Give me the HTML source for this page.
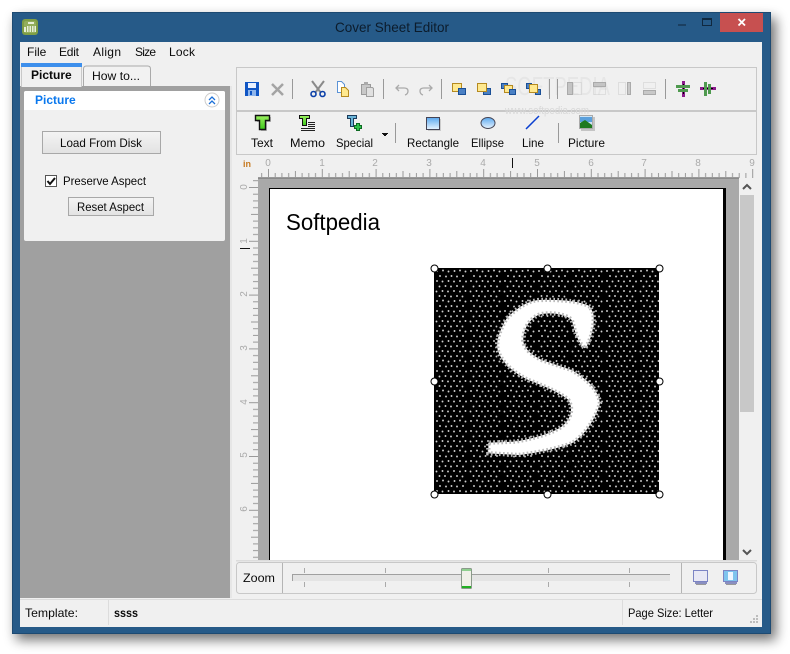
<!DOCTYPE html>
<html><head><meta charset="utf-8"><title>Cover Sheet Editor</title>
<style>
html,body{margin:0;padding:0;background:#fff;width:790px;height:654px;overflow:hidden}
svg{display:block;position:absolute;left:0;top:0}
text{font-family:"Liberation Sans",sans-serif;font-size:12px;fill:#0a0a0a}
.b{font-weight:bold}
.r{fill:#aaa;font-size:10px;text-anchor:middle}
</style></head><body>
<svg width="790" height="654" viewBox="0 0 790 654" xmlns="http://www.w3.org/2000/svg">
<defs>
<filter id="sh" x="-10%" y="-10%" width="120%" height="120%"><feGaussianBlur stdDeviation="6"/></filter>
<linearGradient id="btn" x1="0" y1="0" x2="0" y2="1"><stop offset="0" stop-color="#f4f4f4"/><stop offset="1" stop-color="#e2e2e2"/></linearGradient>
<linearGradient id="sky" x1="0" y1="0" x2="0" y2="1"><stop offset="0" stop-color="#5aa8ee"/><stop offset="1" stop-color="#e8f4ff"/></linearGradient>
<linearGradient id="grn" x1="0" y1="0" x2="0" y2="1"><stop offset="0" stop-color="#9cf060"/><stop offset="1" stop-color="#3cc81a"/></linearGradient>
<pattern id="hr" x="268" y="168" width="53.8" height="10" patternUnits="userSpaceOnUse">
<rect x="0" y="1" width="1" height="9" fill="#999"/><rect x="6.7" y="5" width="1" height="5" fill="#999"/><rect x="13.4" y="5" width="1" height="5" fill="#999"/><rect x="20.2" y="5" width="1" height="5" fill="#999"/><rect x="26.9" y="3" width="1" height="7" fill="#999"/><rect x="33.6" y="5" width="1" height="5" fill="#999"/><rect x="40.3" y="5" width="1" height="5" fill="#999"/><rect x="47" y="5" width="1" height="5" fill="#999"/>
</pattern>
<pattern id="vr" x="248" y="187" width="10" height="53.8" patternUnits="userSpaceOnUse">
<rect y="0" x="1" height="1" width="9" fill="#999"/><rect y="6.7" x="5" height="1" width="5" fill="#999"/><rect y="13.4" x="5" height="1" width="5" fill="#999"/><rect y="20.2" x="5" height="1" width="5" fill="#999"/><rect y="26.9" x="3" height="1" width="7" fill="#999"/><rect y="33.6" x="5" height="1" width="5" fill="#999"/><rect y="40.3" x="5" height="1" width="5" fill="#999"/><rect y="47" x="5" height="1" width="5" fill="#999"/>
</pattern>
<pattern id="dots" x="434" y="268" width="34" height="30" patternUnits="userSpaceOnUse">
<g fill="#cfcfcf">
<circle cx="3" cy="3" r=".95"/><circle cx="9" cy="2.5" r=".95"/><circle cx="14.5" cy="3.5" r=".95"/><circle cx="20.5" cy="3" r=".95"/><circle cx="26" cy="2.5" r=".95"/><circle cx="31.5" cy="3.5" r=".95"/>
<circle cx="6" cy="8" r=".95"/><circle cx="12" cy="8.5" r=".95"/><circle cx="17.5" cy="8" r=".95"/><circle cx="23" cy="8.5" r=".95"/><circle cx="29" cy="8" r=".95"/>
<circle cx="3" cy="13" r=".95"/><circle cx="8.5" cy="13.5" r=".95"/><circle cx="14.5" cy="13" r=".95"/><circle cx="20" cy="13.5" r=".95"/><circle cx="26" cy="13" r=".95"/><circle cx="32" cy="13.5" r=".95"/>
<circle cx="5.5" cy="18.5" r=".95"/><circle cx="11.5" cy="18" r=".95"/><circle cx="17" cy="18.5" r=".95"/><circle cx="23" cy="18" r=".95"/><circle cx="29" cy="18.5" r=".95"/>
<circle cx="2.5" cy="23.5" r=".95"/><circle cx="8.5" cy="23" r=".95"/><circle cx="14" cy="23.5" r=".95"/><circle cx="20" cy="23" r=".95"/><circle cx="26" cy="23.5" r=".95"/><circle cx="31.5" cy="23" r=".95"/>
<circle cx="5.5" cy="28" r=".95"/><circle cx="11" cy="28" r=".95"/><circle cx="17" cy="28.5" r=".95"/><circle cx="23" cy="28" r=".95"/><circle cx="28.5" cy="28.5" r=".95"/>
</g>
</pattern>
</defs>

<!-- window -->
<rect x="16" y="18" width="760" height="622" fill="#000" opacity=".55" filter="url(#sh)"/>
<rect x="12" y="12" width="759" height="622" fill="#265a88"/>
<rect x="12.5" y="12.5" width="758" height="621" fill="none" stroke="#1d4a72"/>
<rect x="20" y="42" width="742" height="585" fill="#f0f0f0"/>

<!-- title bar -->
<rect x="22" y="19" width="16" height="16" rx="3" fill="#7f9e45"/>
<rect x="24" y="21" width="12" height="12" rx="2" fill="#93ae5c"/>
<path d="M28 22h6v2h-6zM24 27h2v5h-2zM27 26h9v6h-9z" fill="#e8efd8"/>
<path d="M29 26v6M31.500 26v6M34 26v6" stroke="#7f9e45" stroke-width=".8"/>
<text x="335" y="32" textLength="114" lengthAdjust="spacingAndGlyphs" style="font-size:14px;fill:#0c1c2c">Cover Sheet Editor</text>
<rect x="678" y="24" width="8" height="2" fill="#1b3f60"/>
<rect x="702.500" y="18.500" width="9" height="7" fill="none" stroke="#10283f"/><rect x="702" y="18" width="10" height="2" fill="#10283f"/>
<rect x="720" y="13" width="43" height="19" fill="#c75050"/>
<path d="M738.500 19l6.500 6.500M745 19l-6.500 6.500" stroke="#fff" stroke-width="1.800"/>

<!-- menu -->
<text x="27" y="56">File</text><text x="59" y="56" textLength="20">Edit</text><text x="93" y="56" textLength="28">Align</text><text x="135" y="56" textLength="21">Size</text><text x="169" y="56" textLength="26">Lock</text>

<!-- left panel -->
<rect x="20" y="86" width="210" height="512" fill="#a0a0a0"/>
<rect x="230" y="86" width="2" height="512" fill="#e6e6e6"/>
<path d="M83.500 86V69q0-3 3-3h61q3 0 3 3V86" fill="#f2f2f2" stroke="#aaa"/>
<text x="92" y="80" textLength="48" lengthAdjust="spacingAndGlyphs">How to...</text>
<rect x="21" y="66" width="61" height="21" fill="#f0f0f0"/>
<rect x="21" y="63" width="61" height="4" fill="#3d8fec"/>
<rect x="21" y="67" width="1" height="20" fill="#c8c8c8"/><rect x="81" y="67" width="1" height="20" fill="#c8c8c8"/>
<text x="31" y="79" class="b">Picture</text>
<rect x="24" y="91" width="201" height="150" rx="2" fill="#f0f0f0"/>
<path d="M24 110V93q0-2 2-2h197q2 0 2 2v17z" fill="#fff"/>
<text x="35" y="104" class="b" style="fill:#0a78ee">Picture</text>
<circle cx="212" cy="100" r="7" fill="#fff" stroke="#ccc"/>
<path d="M209 100l3-3 3 3M209 104l3-3 3 3" fill="none" stroke="#1a6fd8" stroke-width="1.300"/>
<rect x="42.500" y="131.500" width="118" height="22" fill="url(#btn)" stroke="#a8a8a8"/>
<text x="60" y="147" textLength="82" lengthAdjust="spacingAndGlyphs">Load From Disk</text>
<rect x="45.500" y="175.500" width="11" height="11" fill="#fff" stroke="#555"/>
<path d="M47.500 181l2.500 3 5-6" fill="none" stroke="#111" stroke-width="2"/>
<text x="63" y="185" textLength="83" lengthAdjust="spacingAndGlyphs">Preserve Aspect</text>
<rect x="68.500" y="197.500" width="85" height="18" fill="url(#btn)" stroke="#a8a8a8"/>
<text x="77" y="211" textLength="67" lengthAdjust="spacingAndGlyphs">Reset Aspect</text>

<!-- toolbars -->
<rect x="236.500" y="67.500" width="520" height="43" fill="#f0f0f0" stroke="#c8c8c8"/>
<rect x="236.500" y="111.500" width="520" height="43" fill="#f0f0f0" stroke="#c8c8c8"/>
<rect x="236" y="110" width="521" height="2" fill="#c8c8c8"/>

<!-- watermark -->
<text x="505" y="95" textLength="105" lengthAdjust="spacingAndGlyphs" style="font-size:26px;fill:#e6e6e6">SOFTPEDIA</text>
<text x="505" y="114" textLength="84" lengthAdjust="spacingAndGlyphs" style="font-size:11px;fill:#d8d8d8">www.softpedia.com</text>

<!-- toolbar 1 icons -->
<path d="M245 82h14v14h-14z" fill="#0f55c4"/><rect x="248" y="83" width="8" height="5" fill="#e8f0ff"/><rect x="248" y="90" width="8" height="6" fill="#8fb6ec"/><rect x="250" y="91" width="2" height="4" fill="#0f55c4"/>
<path d="M272 84l11 11M283 84l-11 11" stroke="#a4a4a4" stroke-width="2.500"/>
<rect x="292" y="79" width="1" height="20" fill="#999"/>
<path d="M312 81l9 12M324 81l-9 12" stroke="#8a8a8a" stroke-width="2"/>
<circle cx="313.500" cy="94" r="2.500" fill="none" stroke="#0a3fa8" stroke-width="1.600"/><circle cx="322.500" cy="94" r="2.500" fill="none" stroke="#0a3fa8" stroke-width="1.600"/>
<path d="M337.500 81.500h4l3 3v8h-7z" fill="#fff" stroke="#5b93d6"/><path d="M341.500 87.500h4l3 3v6h-7z" fill="#ffe98f" stroke="#b58a20"/>
<path d="M361.500 84.500h9v10h-9z" fill="#c8c8c8" stroke="#9a9a9a"/><rect x="364" y="82" width="4" height="3" fill="#aaa"/><path d="M366.500 87.500h6l1 1v8h-7z" fill="#e0e0e0" stroke="#a0a0a0"/>
<rect x="383" y="79" width="1" height="20" fill="#999"/>
<path d="M399 85l-3 3 3 3M397 88h7q4 0 4 3t-3 4" fill="none" stroke="#aaa" stroke-width="1.300"/>
<path d="M429 85l3 3-3 3M431 88h-7q-4 0-4 3t3 4" fill="none" stroke="#aaa" stroke-width="1.300"/>
<rect x="441" y="79" width="1" height="20" fill="#999"/>
<rect x="452.500" y="83.500" width="9" height="8" fill="#ffe98f" stroke="#b58a20"/><rect x="458.500" y="88.500" width="7" height="6" fill="#4a80c4" stroke="#1a4f96"/>
<rect x="483.500" y="88.500" width="7" height="6" fill="#4a80c4" stroke="#1a4f96"/><rect x="477.500" y="83.500" width="9" height="8" fill="#ffe98f" stroke="#b58a20"/>
<rect x="501.500" y="83.500" width="6" height="5" fill="#4a80c4" stroke="#1a4f96"/><rect x="504.500" y="85.500" width="8" height="7" fill="#ffe98f" stroke="#b58a20"/><rect x="509.500" y="89.500" width="6" height="5" fill="#4a80c4" stroke="#1a4f96"/>
<rect x="526.500" y="83.500" width="5" height="5" fill="#4a80c4" stroke="#1a4f96"/><rect x="535.500" y="89.500" width="5" height="5" fill="#4a80c4" stroke="#1a4f96"/><rect x="529.500" y="84.500" width="8" height="8" fill="#ffe98f" stroke="#b58a20"/>
<rect x="549" y="79" width="1" height="20" fill="#999"/><rect x="557" y="79" width="1" height="20" fill="#999"/>
<rect x="567.500" y="82.500" width="5" height="12" fill="#c4c4c4" stroke="#aaa"/><rect x="573.500" y="82.500" width="8" height="12" fill="none" stroke="#ccc" stroke-dasharray="1 1"/>
<rect x="593.500" y="82.500" width="12" height="4" fill="#c4c4c4" stroke="#aaa"/><rect x="593.500" y="87.500" width="12" height="7" fill="none" stroke="#ccc" stroke-dasharray="1 1"/>
<rect x="618.500" y="82.500" width="7" height="12" fill="none" stroke="#ccc" stroke-dasharray="1 1"/><rect x="627.500" y="82.500" width="3" height="12" fill="#c8c8c8" stroke="#aaa"/>
<rect x="643.500" y="82.500" width="12" height="6" fill="none" stroke="#ccc" stroke-dasharray="1 1"/><rect x="643.500" y="90.500" width="12" height="4" fill="#c8c8c8" stroke="#aaa"/>
<rect x="665" y="79" width="1" height="20" fill="#999"/>
<rect x="682" y="81" width="3" height="16" fill="#8a1a8a"/><rect x="683" y="84" width="1" height="10" fill="#000"/><rect x="676" y="85" width="14" height="3" fill="#4f9a4f"/><rect x="678" y="89" width="10" height="3" fill="#4f9a4f"/>
<rect x="700" y="87" width="16" height="3" fill="#8a1a8a"/><rect x="703" y="88" width="10" height="1" fill="#000"/><rect x="704" y="82" width="3" height="14" fill="#4f9a4f"/><rect x="708" y="84" width="3" height="10" fill="#4f9a4f"/>

<!-- toolbar 2 icons -->
<path d="M257 117h14v5h-4v9h-6v-9h-4z" fill="#b8b8b8"/>
<path d="M255.500 115.500h14v5h-4v9h-6v-9h-4z" fill="url(#grn)" stroke="#111" stroke-width="1.400"/>
<path d="M299.500 115.500h10v3h-3v7h-4v-7h-3z" fill="url(#grn)" stroke="#111"/><path d="M308 122.500h7M308 124.500h7M308 126.500h7M301 128.500h14M301 130.500h14" stroke="#222"/>
<path d="M347.500 115.500h9v3h-3v8h-3v-8h-3z" fill="#6ab4d8" stroke="#1a3a5a"/><path d="M356.500 123.500h3v2h2v3h-2v2h-3v-2h-2v-3h2z" fill="#2ec04a" stroke="#0d6a22"/>
<rect x="382" y="133" width="6" height="1" fill="#111"/><rect x="383" y="134" width="4" height="1" fill="#111"/><rect x="384" y="135" width="2" height="1" fill="#111"/>
<rect x="395" y="123" width="1" height="20" fill="#999"/>
<rect x="428" y="119" width="13" height="12" fill="#ccc"/>
<rect x="426.500" y="117.500" width="13" height="12" fill="url(#sky)" stroke="#445"/>
<ellipse cx="488" cy="123" rx="7" ry="5.500" fill="url(#sky)" stroke="#445"/>
<path d="M526 129l13-13" stroke="#0a3fd0" stroke-width="1.500"/>
<rect x="558" y="123" width="1" height="20" fill="#999"/>
<rect x="581" y="117" width="14" height="14" fill="#c4c4c4"/>
<rect x="579.500" y="115.500" width="13" height="13" fill="#cfe4f4" stroke="#aaa"/><rect x="580" y="117" width="12" height="5" fill="#5aa0dc"/><path d="M580 128v-5l5-3 7 5v3z" fill="#1f7a1f"/>
<text x="251" y="147" textLength="22" lengthAdjust="spacingAndGlyphs">Text</text><text x="290" y="147" textLength="35" lengthAdjust="spacingAndGlyphs">Memo</text><text x="336" y="147" textLength="37" lengthAdjust="spacingAndGlyphs">Special</text><text x="407" y="147" textLength="52" lengthAdjust="spacingAndGlyphs">Rectangle</text><text x="471" y="147" textLength="33" lengthAdjust="spacingAndGlyphs">Ellipse</text><text x="522" y="147" textLength="22" lengthAdjust="spacingAndGlyphs">Line</text><text x="568" y="147" textLength="37" lengthAdjust="spacingAndGlyphs">Picture</text>

<!-- rulers -->
<text x="243" y="167" style="font-size:9px;font-weight:bold;fill:#c77a20">in</text>
<rect x="258" y="168" width="499" height="10" fill="url(#hr)"/>
<rect x="258" y="177" width="481" height="1" fill="#999"/>
<g><text class="r" x="268" y="166">0</text><text class="r" x="322" y="166">1</text><text class="r" x="375" y="166">2</text><text class="r" x="429" y="166">3</text><text class="r" x="483" y="166">4</text><text class="r" x="537" y="166">5</text><text class="r" x="591" y="166">6</text><text class="r" x="644" y="166">7</text><text class="r" x="698" y="166">8</text><text class="r" x="752" y="166">9</text></g>
<rect x="512" y="158" width="1" height="10" fill="#111"/>
<rect x="248" y="178" width="10" height="382" fill="url(#vr)"/>
<text class="r" transform="translate(247,187) rotate(-90)">0</text><text class="r" transform="translate(247,241) rotate(-90)">1</text><text class="r" transform="translate(247,294) rotate(-90)">2</text><text class="r" transform="translate(247,348) rotate(-90)">3</text><text class="r" transform="translate(247,402) rotate(-90)">4</text><text class="r" transform="translate(247,455) rotate(-90)">5</text><text class="r" transform="translate(247,509) rotate(-90)">6</text>
<rect x="240" y="248" width="10" height="1" fill="#111"/>

<!-- canvas -->
<rect x="258" y="178" width="481" height="382" fill="#a9a9a9"/>
<rect x="258" y="178" width="481" height="1" fill="#8a8a8a"/>
<rect x="269" y="188" width="457" height="372" fill="#000"/>
<rect x="270" y="189" width="453" height="371" fill="#fff"/>
<text x="286" y="230" textLength="94" lengthAdjust="spacingAndGlyphs" style="font-size:23px;fill:#000">Softpedia</text>

<!-- scrollbar -->
<rect x="739" y="178" width="17" height="382" fill="#f0f0f0"/>
<rect x="740" y="195" width="14" height="217" fill="#c8c8c8"/>
<path d="M743 189l4-4 4 4" fill="none" stroke="#555" stroke-width="2"/>
<path d="M743 550l4 4 4-4" fill="none" stroke="#555" stroke-width="2"/>

<!-- stipple picture -->
<rect x="434" y="268" width="225" height="226" fill="#000"/>
<rect x="434" y="268" width="225" height="226" fill="url(#dots)"/>
<g transform="translate(425,260) scale(.3333)">
<path d="M495 140C470 125 420 118 340 120C300 125 270 150 245 175C225 210 212 240 218 270C230 310 270 340 310 360C350 375 410 400 430 420C445 445 440 475 410 500C380 520 330 535 270 545L190 548L190 580L280 585C330 580 400 565 440 550C480 525 510 480 525 430C520 390 490 360 440 330C410 320 380 310 350 300C320 285 295 265 295 240C295 210 310 180 340 165C370 155 420 160 440 180C450 210 455 245 480 265C500 240 510 190 505 160Z" fill="#fff" stroke="#bbb" stroke-width="13" stroke-dasharray="5 7"/>
</g>
<g fill="#fff" stroke="#000">
<circle cx="434.500" cy="268.500" r="3.500"/><circle cx="547.500" cy="268.500" r="3.500"/><circle cx="659.500" cy="268.500" r="3.500"/>
<circle cx="434.500" cy="381.500" r="3.500"/><circle cx="659.500" cy="381.500" r="3.500"/>
<circle cx="434.500" cy="494.500" r="3.500"/><circle cx="547.500" cy="494.500" r="3.500"/><circle cx="659.500" cy="494.500" r="3.500"/>
</g>

<!-- zoom bar -->
<rect x="232" y="560" width="530" height="38" fill="#f0f0f0"/>
<rect x="236" y="560" width="521" height="1.500" fill="#dcdcdc"/>
<rect x="236.500" y="562.500" width="520" height="31" rx="3" fill="#f0f0f0" stroke="#c8c8c8"/>
<text x="243" y="582" textLength="32" lengthAdjust="spacingAndGlyphs">Zoom</text>
<rect x="282" y="563" width="1" height="30" fill="#b4b4b4"/>
<rect x="292" y="574" width="378" height="7" fill="#e4e4e4"/>
<rect x="292" y="574" width="378" height="1" fill="#a0a0a0"/><rect x="292" y="574" width="1" height="7" fill="#a0a0a0"/>
<path d="M304.500 568v5M304.500 582v5M385.500 568v5M385.500 582v5M467.500 568v5M467.500 582v5M548.500 568v5M548.500 582v5M629.500 568v5M629.500 582v5" stroke="#aaa"/>
<rect x="461.500" y="568.500" width="10" height="20" rx="1" fill="#f0f0e8" stroke="#8a9a8a"/>
<rect x="462" y="569" width="9" height="2" fill="#8fd08f"/><rect x="462" y="586" width="9" height="2" fill="#22b022"/>
<rect x="681" y="563" width="1" height="30" fill="#b4b4b4"/>
<rect x="693.500" y="570.500" width="14" height="11" fill="#e8e8f4" stroke="#7c84c4"/><rect x="695" y="582" width="12" height="2" fill="#8a8fc0"/><rect x="696" y="584" width="10" height="1" fill="#999"/>
<rect x="723.500" y="570.500" width="14" height="11" fill="#7fc4ee" stroke="#7c84c4"/><rect x="728" y="572" width="5" height="8" fill="#eef6ff"/><rect x="725" y="582" width="12" height="2" fill="#8a8fc0"/><rect x="726" y="584" width="10" height="1" fill="#999"/>

<!-- status bar -->
<rect x="20" y="599" width="742" height="1" fill="#dcdcdc"/>
<rect x="108" y="600" width="1" height="25" fill="#dcdcdc"/><rect x="622" y="600" width="1" height="25" fill="#dcdcdc"/>
<text x="25" y="617" textLength="53" lengthAdjust="spacingAndGlyphs">Template:</text><text x="114" y="617" class="b" textLength="24" lengthAdjust="spacingAndGlyphs">ssss</text><text x="628" y="617" textLength="85" lengthAdjust="spacingAndGlyphs">Page Size: Letter</text>
<path d="M756 615h2v2h-2zM753 618h2v2h-2zM756 618h2v2h-2zM750 621h2v2h-2zM753 621h2v2h-2zM756 621h2v2h-2z" fill="#bdbdbd"/>
</svg>
</body></html>
